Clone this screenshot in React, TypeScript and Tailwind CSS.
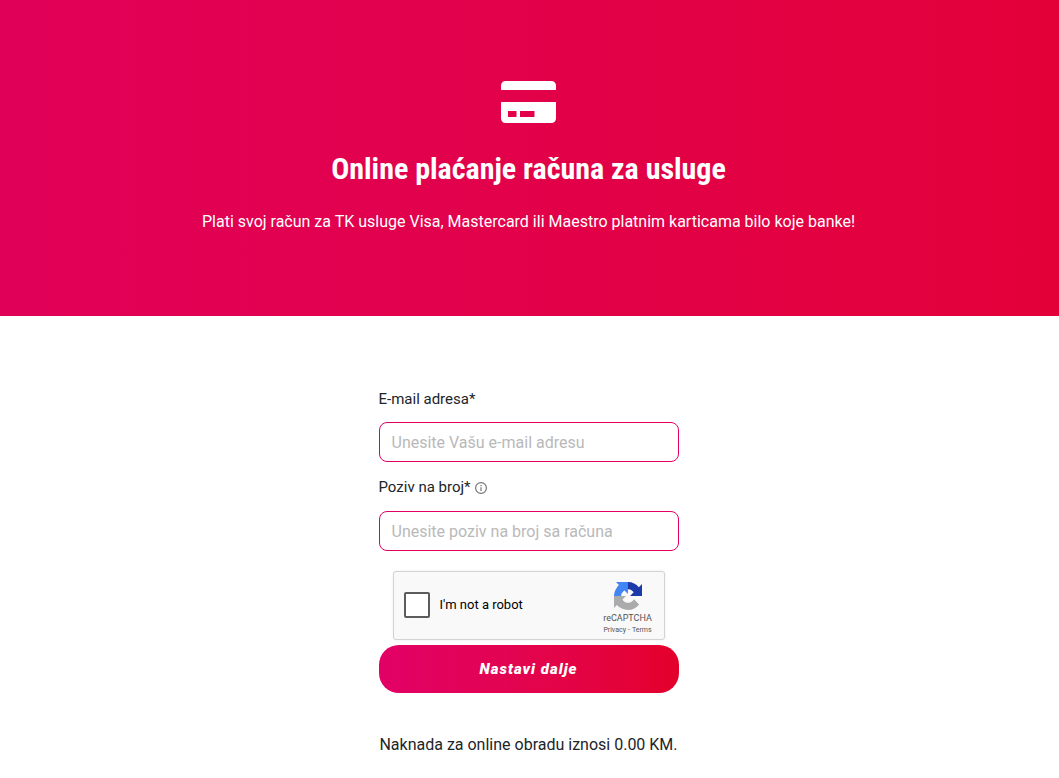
function CardIcon() {
  return (
    <svg viewBox="0 0 55 42" className="h-[42px] w-[55px]" fill="currentColor" aria-hidden="true">
      <path d="M4.5 0h46A4.5 4.5 0 0 1 55 4.500V9H0V4.500A4.500 4.500 0 0 1 4.500 0Z" />
      <path
        fillRule="evenodd"
        d="M0 21H55V37.500A4.500 4.500 0 0 1 50.500 42H4.500A4.500 4.500 0 0 1 0 37.500ZM7 30V36H15.500V30ZM19 30V36H33.500V30Z"
      />
    </svg>
  );
}

function InfoIcon() {
  return (
    <svg viewBox="0 0 12 12" className="mt-px h-3 w-3 text-[#757575]" fill="none" stroke="currentColor" aria-hidden="true">
      <circle cx="6" cy="6" r="5.400" strokeWidth="1.200" />
      <path d="M6 5.300V9M6 3V4.200" strokeWidth="1.200" />
    </svg>
  );
}

function RecaptchaLogo() {
  return (
    <svg viewBox="0 0 64 64" className="h-7 w-7" aria-hidden="true">
      <path
        fill="#1c3aa9"
        d="M64 31.955l-.018-1.37V4.687l-7.16 7.16C50.96 4.674 42.033.093 32.05.093c-10.4 0-19.63 4.96-25.458 12.64l11.736 11.86a15.55 15.55 0 0 1 4.754-5.334c2.05-1.6 4.952-2.906 8.968-2.906.485 0 .86.057 1.135.163 4.976.393 9.288 3.14 11.828 7.124l-8.307 8.307L64 31.953"
      />
      <path
        fill="#4285f4"
        d="M31.862.094l-1.37.018H4.594l7.16 7.16C4.58 13.147 0 22.073 0 32.056c0 10.4 4.96 19.63 12.64 25.458L24.5 45.777a15.55 15.55 0 0 1-5.334-4.754c-1.6-2.05-2.906-4.952-2.906-8.968 0-.485.057-.86.163-1.135.393-4.976 3.14-9.288 7.124-11.828l8.307 8.307L31.86.095"
      />
      <path
        fill="#ababab"
        d="M.001 32.045l.018 1.37v25.898l7.16-7.16c5.873 7.173 14.8 11.754 24.783 11.754 10.4 0 19.63-4.96 25.458-12.64l-11.736-11.86a15.55 15.55 0 0 1-4.754 5.334c-2.05 1.6-4.952 2.906-8.968 2.906-.485 0-.86-.057-1.135-.163-4.976-.393-9.288-3.14-11.828-7.124l8.307-8.307c-10.522.04-22.4.066-27.295-.005"
      />
    </svg>
  );
}

const inputClass =
  "h-10 w-full rounded-lg border border-[#e20065] bg-white px-3 text-base text-[#212529] outline-none placeholder:text-[#b9b9b9]";

function Recaptcha() {
  return (
    <div className="mx-auto mt-5 flex h-[69px] w-[272px] items-center justify-between rounded-[3px] border border-[#d3d3d3] bg-[#f9f9f9] pr-2 pl-[10px] shadow-[0_0_3px_0_rgba(0,0,0,0.08)]">
      <label className="flex items-center gap-[10px] pb-px text-[13px] text-black">
        <input
          type="checkbox"
          className="h-[26px] w-[26px] appearance-none rounded-[2px] border-2 border-[#5c5c5c] bg-white"
        />
        I'm not a robot
      </label>
      <div className="flex w-14 flex-col items-center pt-1 text-[#555555]">
        <RecaptchaLogo />
        <span className="text-[9px] leading-4">reCAPTCHA</span>
        <div className="flex gap-[2px] text-[7px] leading-2 whitespace-nowrap">
          <a href="#privacy">Privacy</a>
          <span>-</span>
          <a href="#terms">Terms</a>
        </div>
      </div>
    </div>
  );
}

export default function App() {
  return (
    <div className="min-h-screen bg-white font-['Roboto',sans-serif] text-[#212529]">
      <header className="flex flex-col items-center bg-linear-to-r from-[#e10058] to-[#e30039] pt-[81px] pr-[26px] pb-[82px] pl-6 text-center text-white">
        <CardIcon />
        <h1 className="mt-[26px] font-['Roboto_Condensed',sans-serif] text-[30px] leading-10 font-bold">
          Online plaćanje računa za usluge
        </h1>
        <p className="mt-[21px] text-base leading-6">
          Plati svoj račun za TK usluge Visa, Mastercard ili Maestro platnim karticama bilo koje banke!
        </p>
      </header>
      <main className="pt-[72px] pr-[18px] pb-5 pl-4">
        <form className="mx-auto w-full max-w-[300px]" onSubmit={(e) => e.preventDefault()}>
          <label htmlFor="email" className="mb-3 block text-[15px] leading-[22px]">
            E-mail adresa*
          </label>
          <input id="email" type="email" placeholder="Unesite Vašu e-mail adresu" className={inputClass} />
          <label htmlFor="reference" className="mt-[14px] mb-[13px] flex items-center gap-1 text-[15px] leading-[22px]">
            Poziv na broj*
            <InfoIcon />
          </label>
          <input id="reference" type="text" placeholder="Unesite poziv na broj sa računa" className={inputClass} />
          <Recaptcha />
          <button
            type="submit"
            className="mt-[5px] h-12 w-full rounded-[20px] bg-linear-to-r from-[#e20067] to-[#e4002b] text-[15px] font-black tracking-[1px] text-white italic"
          >
            Nastavi dalje
          </button>
        </form>
        <p className="mt-10 text-center text-base leading-6">Naknada za online obradu iznosi 0.00 KM.</p>
      </main>
    </div>
  );
}
